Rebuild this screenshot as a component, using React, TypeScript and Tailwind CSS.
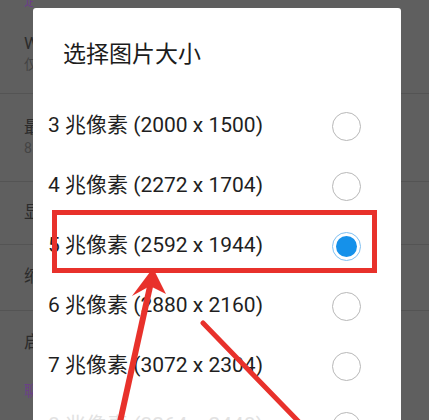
import React from "react";

const options = [
  { mp: 3, res: "2000 x 1500" },
  { mp: 4, res: "2272 x 1704" },
  { mp: 5, res: "2592 x 1944", selected: true },
  { mp: 6, res: "2880 x 2160" },
  { mp: 7, res: "3072 x 2304" },
  { mp: 8, res: "3264 x 2448", faded: true },
];

function Radio({ selected }: { selected?: boolean }) {
  if (selected) {
    return (
      <div className="w-[29px] h-[29px] shrink-0 rounded-full border-[1.5px] border-[#7fc0f2] flex items-center justify-center">
        <div className="w-[21px] h-[21px] rounded-full bg-[#1591ea]" />
      </div>
    );
  }
  return <div className="w-[29px] h-[29px] shrink-0 rounded-full border-[1.5px] border-[#b8b8b8]" />;
}

export default function App() {
  return (
    <div
      className="relative w-[429px] h-[420px] overflow-hidden bg-[#5f5f5f]"
      style={{ fontFamily: 'Roboto, "Noto Sans CJK SC", "Noto Sans", sans-serif' }}
    >
      {/* dimmed settings page behind (only the left strip shows) */}
      <div className="flex">
        <div className="w-[33px] overflow-hidden flex flex-col pl-[24px] shrink-0">
          <div className="h-[12px] shrink-0 overflow-hidden flex items-end">
            <div className="text-[16px] leading-[12px] text-[#6b3f86] whitespace-nowrap -translate-y-[5px]">通</div>
          </div>
          <div className="h-[81px] shrink-0 flex flex-col justify-center">
            <div className="text-[17px] leading-[22px] text-[#2b2b2b] whitespace-nowrap">W</div>
            <div className="text-[14px] leading-[20px] text-[#444] whitespace-nowrap">仅</div>
          </div>
          <div className="h-[88px] shrink-0 flex flex-col justify-center">
            <div className="text-[17px] leading-[22px] text-[#2b2b2b] whitespace-nowrap">最</div>
            <div className="text-[14px] leading-[20px] text-[#444] whitespace-nowrap">8</div>
          </div>
          <div className="h-[63px] shrink-0 flex items-center">
            <div className="text-[17px] text-[#2b2b2b] whitespace-nowrap">显</div>
          </div>
          <div className="h-[66px] shrink-0 flex items-center">
            <div className="text-[17px] text-[#2b2b2b] whitespace-nowrap">缩</div>
          </div>
          <div className="h-[66px] shrink-0 flex items-center">
            <div className="text-[17px] text-[#2b2b2b] whitespace-nowrap">启</div>
          </div>
          <div className="h-[30px] shrink-0 flex items-center">
            <div className="text-[15px] text-[#6b3f86] whitespace-nowrap">聊</div>
          </div>
        </div>
      </div>

      {/* separators of the page behind */}
      <div className="absolute left-0 right-0 top-[93px] h-px bg-[#545454]" />
      <div className="absolute left-0 right-0 top-[181px] h-px bg-[#545454]" />
      <div className="absolute left-0 right-0 top-[244px] h-px bg-[#545454]" />
      <div className="absolute left-0 right-0 top-[310px] h-px bg-[#545454]" />

      {/* dialog */}
      <div className="absolute left-[33px] top-[8px] w-[368px] h-[470px] bg-white rounded-[3px] flex flex-col">
        <div className="h-[88px] shrink-0 pt-[6px] flex items-center pl-[30px] text-[23px] text-[#1c1c1c]">
          选择图片大小
        </div>
        {options.map((o) => (
          <div key={o.mp} className="h-[60px] shrink-0 flex items-center justify-between pl-[15px] pr-[40px]">
            <span className={`text-[21px] whitespace-nowrap ${o.faded ? "text-[#e2e2e2]" : "text-[#1f1f1f]"}`}>
              {o.mp} 兆像素 ({o.res})
            </span>
            <Radio selected={o.selected} />
          </div>
        ))}
      </div>

      {/* annotation box */}
      <div className="absolute left-[52px] top-[210px] w-[325px] h-[63px] border-[5px] border-[#e8312b]" />

      {/* annotation arrows */}
      <svg className="absolute inset-0" width="429" height="420" viewBox="0 0 429 420">
        <line x1="120" y1="422" x2="151" y2="282" stroke="#e8312b" strokeWidth="6" />
        <polygon points="153,268 132,296 150,286 166,294" fill="#e8312b" />
        <line x1="203" y1="323" x2="299" y2="422" stroke="#e8312b" strokeWidth="5" strokeLinecap="round" />
      </svg>
    </div>
  );
}
